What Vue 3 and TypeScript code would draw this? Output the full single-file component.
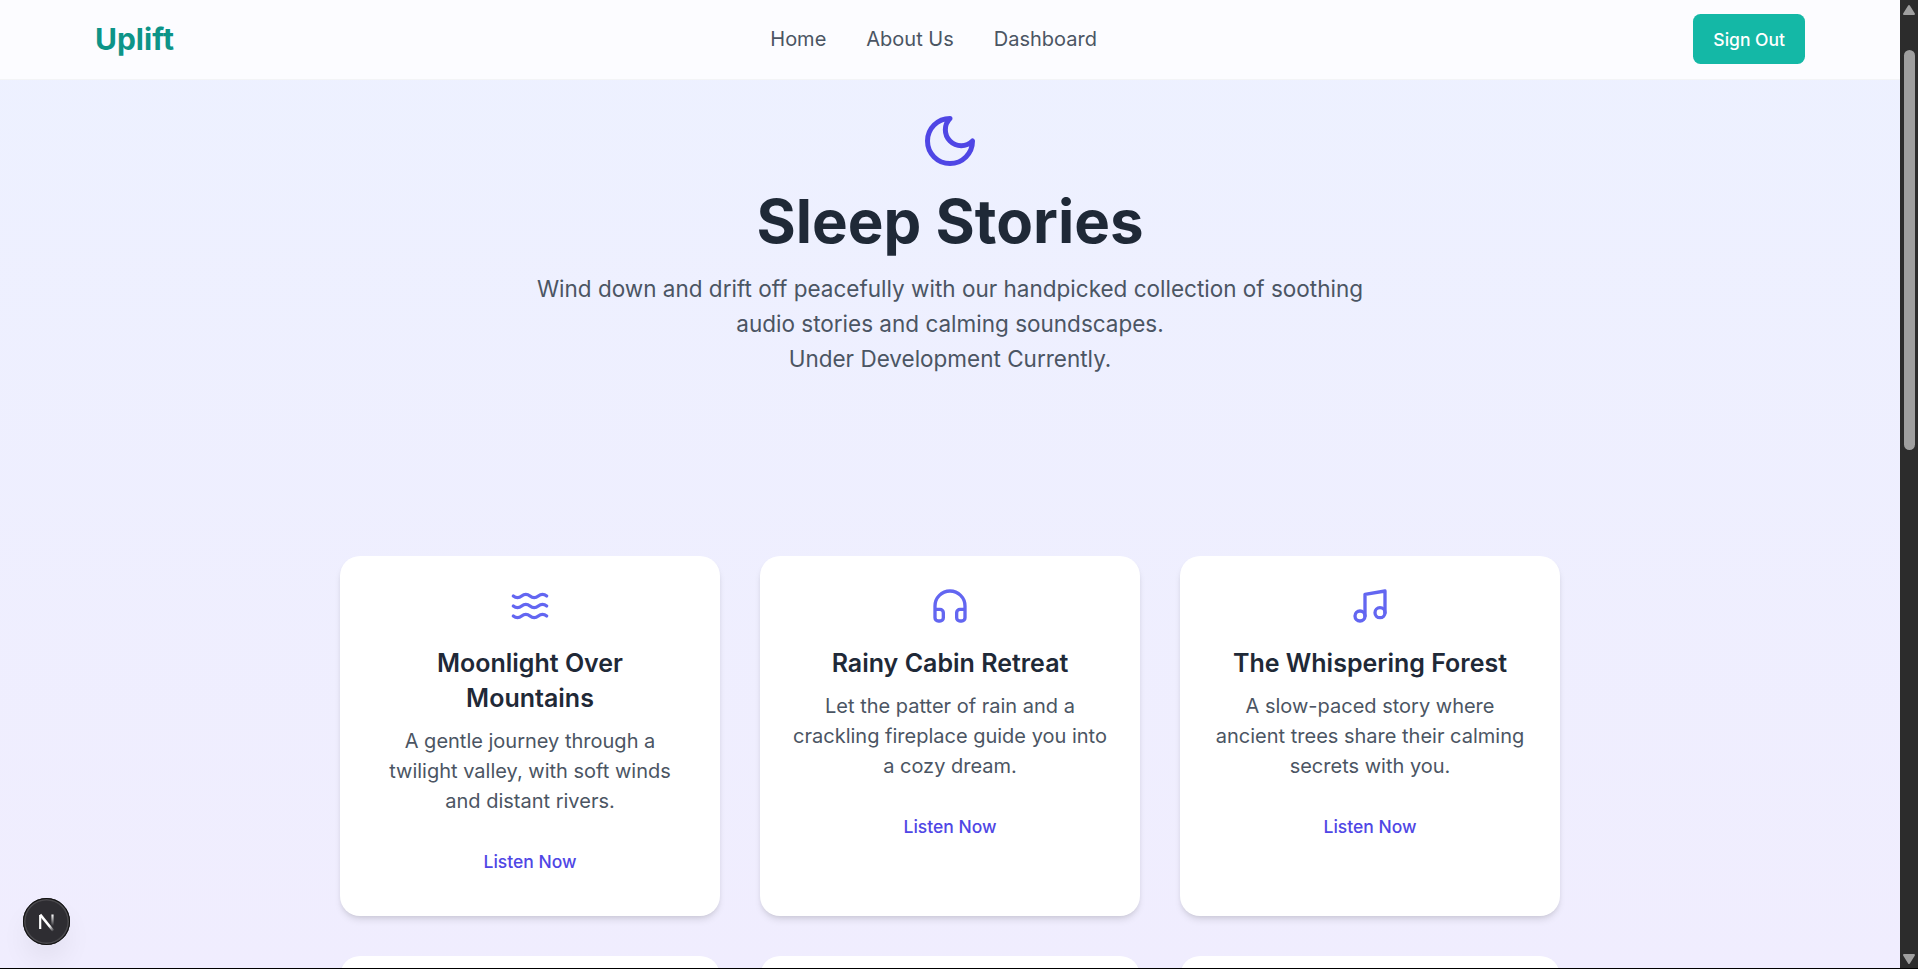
<script setup lang="ts">
type Icon = 'waves' | 'headphones' | 'music'

interface Story {
  title: string
  description: string
  icon: Icon
}

const links: string[] = ['Home', 'About Us', 'Dashboard']

const stories: Story[] = [
  {
    title: 'Moonlight Over Mountains',
    description:
      'A gentle journey through a twilight valley, with soft winds and distant rivers.',
    icon: 'waves',
  },
  {
    title: 'Rainy Cabin Retreat',
    description:
      'Let the patter of rain and a crackling fireplace guide you into a cozy dream.',
    icon: 'headphones',
  },
  {
    title: 'The Whispering Forest',
    description:
      'A slow-paced story where ancient trees share their calming secrets with you.',
    icon: 'music',
  },
]

const iconPaths: Record<Icon, string[]> = {
  waves: [
    'M2 6c.6.5 1.2 1 2.5 1C7 7 7 5 9.5 5c2.6 0 2.4 2 5 2 2.5 0 2.5-2 5-2 1.3 0 1.9.5 2.5 1',
    'M2 12c.6.5 1.2 1 2.5 1 2.5 0 2.5-2 5-2 2.6 0 2.4 2 5 2 2.5 0 2.5-2 5-2 1.3 0 1.9.5 2.5 1',
    'M2 18c.6.5 1.2 1 2.5 1 2.5 0 2.5-2 5-2 2.6 0 2.4 2 5 2 2.5 0 2.5-2 5-2 1.3 0 1.9.5 2.5 1',
  ],
  headphones: [
    'M3 14h3a2 2 0 0 1 2 2v3a2 2 0 0 1-2 2H5a2 2 0 0 1-2-2v-7a9 9 0 0 1 18 0v7a2 2 0 0 1-2 2h-1a2 2 0 0 1-2-2v-3a2 2 0 0 1 2-2h3',
  ],
  music: [
    'M9 18V5l12-2v13',
    'M9 18a3 3 0 1 1-6 0 3 3 0 0 1 6 0z',
    'M21 16a3 3 0 1 1-6 0 3 3 0 0 1 6 0z',
  ],
}
</script>

<template>
  <div class="window">
    <div class="page">
      <header class="navbar">
        <a class="brand">Uplift</a>
        <nav class="links">
          <a v-for="link in links" :key="link">{{ link }}</a>
        </nav>
        <button class="sign-out">Sign Out</button>
      </header>

      <main class="content">
        <section class="hero">
          <svg class="icon moon" viewBox="0 0 24 24">
            <path d="M12 3a6 6 0 0 0 9 9 9 9 0 1 1-9-9Z" />
          </svg>
          <h1>Sleep Stories</h1>
          <p>
            Wind down and drift off peacefully with our handpicked collection of soothing
            audio stories and calming soundscapes.<br />
            Under Development Currently.
          </p>
        </section>

        <section class="grid">
          <article v-for="story in stories" :key="story.title" class="card">
            <svg class="icon" viewBox="0 0 24 24">
              <path v-for="d in iconPaths[story.icon]" :key="d" :d="d" />
            </svg>
            <h3>{{ story.title }}</h3>
            <p>{{ story.description }}</p>
            <button class="listen">Listen Now</button>
          </article>
          <article v-for="n in 3" :key="n" class="card" />
        </section>
      </main>
    </div>

    <div class="scrollbar">
      <svg viewBox="0 0 18 20">
        <path d="M9 6 14 14H4Z" />
      </svg>
      <div class="track"><div class="thumb" /></div>
      <svg viewBox="0 0 18 20">
        <path d="M9 15 14 7H4Z" />
      </svg>
    </div>

    <div class="dev-badge">
      <svg viewBox="0 0 47 47">
        <defs>
          <linearGradient id="diagonal" x1="22" y1="23" x2="31" y2="33" gradientUnits="userSpaceOnUse">
            <stop offset="0.5" stop-color="#fff" />
            <stop offset="1" stop-color="#fff" stop-opacity="0" />
          </linearGradient>
          <linearGradient id="stem" x1="0" y1="16.5" x2="0" y2="28" gradientUnits="userSpaceOnUse">
            <stop offset="0" stop-color="#fff" />
            <stop offset="1" stop-color="#fff" stop-opacity="0" />
          </linearGradient>
        </defs>
        <path d="M17.2 31V17" stroke="#fff" stroke-width="2.2" />
        <path d="M17.2 16.6 30.2 32.8" stroke="url(#diagonal)" stroke-width="2.5" />
        <path d="M29.5 16.5V28" stroke="url(#stem)" stroke-width="2.2" />
      </svg>
    </div>
  </div>
</template>

<style>
body {
  margin: 0;
  overflow: hidden;
}
</style>

<style scoped>
.window {
  position: relative;
  box-sizing: border-box;
  display: flex;
  width: 100vw;
  height: 100vh;
  overflow: hidden;
  border-bottom: 1px solid #000;
  font-family: Inter, 'Liberation Sans', sans-serif;
}

.page {
  flex: 1;
  display: flex;
  flex-direction: column;
  overflow: hidden;
  background: linear-gradient(to bottom, #edf1ff, #f0edfe);
}

.navbar {
  box-sizing: border-box;
  flex: none;
  display: flex;
  align-items: center;
  justify-content: space-between;
  height: 80px;
  padding: 0 95px 1px;
  background: #fcfcff;
  border-bottom: 1px solid #f3f4f6;
}

.brand {
  font-size: 30px;
  font-weight: 700;
  color: #0d9488;
}

.links {
  display: flex;
  gap: 40px;
  font-size: 20px;
  color: #4b5563;
}

button {
  border: 0;
  padding: 0;
  font-family: inherit;
  font-size: 17.5px;
  font-weight: 500;
}

.sign-out {
  height: 50px;
  padding: 0 20px;
  border-radius: 7.5px;
  background: #14b8a6;
  color: #fff;
}

.content {
  display: flex;
  flex-direction: column;
  align-items: center;
  gap: 180px;
  padding-top: 31px;
  text-align: center;
}

.hero {
  display: flex;
  flex-direction: column;
  align-items: center;
  gap: 20px;
}

.icon {
  width: 40px;
  height: 40px;
  fill: none;
  stroke: #6366f1;
  stroke-width: 2;
  stroke-linecap: round;
  stroke-linejoin: round;
}

.icon.moon {
  width: 60px;
  height: 60px;
  stroke: #4f46e5;
}

h1 {
  margin: 0;
  font-size: 60px;
  line-height: 60px;
  font-weight: 700;
  color: #1f2937;
}

.hero p {
  width: 839px;
  margin: 0;
  font-size: 22.5px;
  line-height: 35px;
  color: #4b5563;
}

.grid {
  display: grid;
  grid-template-columns: repeat(3, 380px);
  grid-auto-rows: 360px;
  gap: 40px;
}

.card {
  box-sizing: border-box;
  display: flex;
  flex-direction: column;
  align-items: center;
  padding: 30px;
  border-radius: 20px;
  background: #fff;
  box-shadow:
    0 5px 7.5px -1px rgba(0, 0, 0, 0.1),
    0 2.5px 5px -2.5px rgba(0, 0, 0, 0.1);
}

.card h3 {
  margin: 20px 0 10px;
  font-size: 25px;
  line-height: 35px;
  font-weight: 600;
  color: #1f2937;
}

.card p {
  margin: 0 0 20px;
  font-size: 20px;
  line-height: 30px;
  color: #4b5563;
}

.listen {
  height: 50px;
  background: none;
  color: #4f46e5;
}

.scrollbar {
  flex: none;
  display: flex;
  flex-direction: column;
  width: 18px;
  background: #2c2c2c;
}

.scrollbar svg {
  display: block;
  width: 18px;
  height: 20px;
  fill: #9f9f9f;
  stroke: #9f9f9f;
  stroke-width: 2;
  stroke-linejoin: round;
}

.track {
  flex: 1;
  padding: 30px 3px 0 4px;
}

.thumb {
  height: 400px;
  border-radius: 5.5px;
  background: #9f9f9f;
}

/* floats over the page in the bottom corner */
.dev-badge {
  position: absolute;
  left: 23px;
  bottom: 23px;
  box-sizing: border-box;
  width: 47px;
  height: 47px;
  border-radius: 50%;
  background: #2e2d32;
  box-shadow:
    inset 0 0 0 1px #111,
    inset 0 0 0 2.5px #4a494d,
    0 16px 32px -8px rgba(0, 0, 0, 0.12);
}

.dev-badge svg {
  display: block;
  width: 47px;
  height: 47px;
  fill: none;
}
</style>
